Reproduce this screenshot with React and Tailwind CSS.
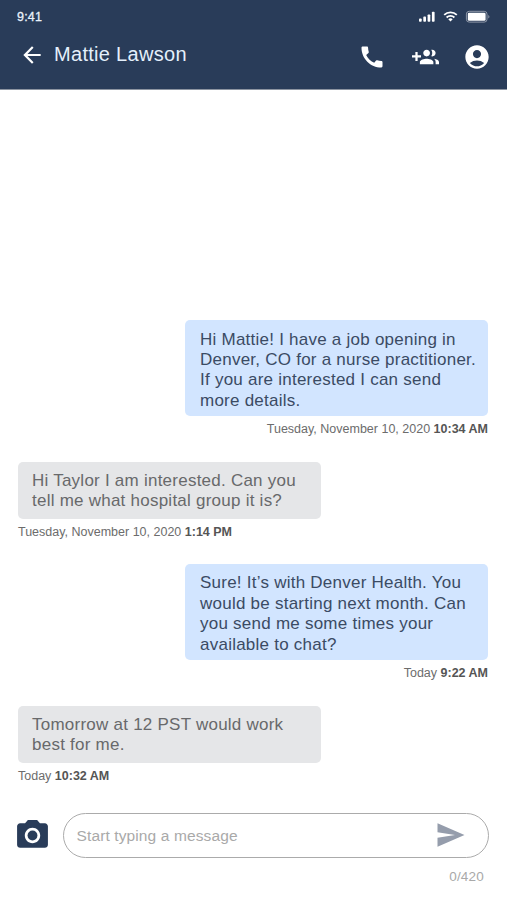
import React from 'react';
import { MdArrowBack, MdCall, MdAccountCircle, MdPhotoCamera } from 'react-icons/md';

const messages = [
  {
    mine: true,
    lines: ['Hi Mattie! I have a job opening in', 'Denver, CO for a nurse practitioner.', 'If you are interested I can send', 'more details.'],
    day: 'Tuesday, November 10, 2020',
    time: '10:34 AM',
  },
  {
    mine: false,
    lines: ['Hi Taylor I am interested. Can you', 'tell me what hospital group it is?'],
    day: 'Tuesday, November 10, 2020',
    time: '1:14 PM',
  },
  {
    mine: true,
    lines: ['Sure! It’s with Denver Health. You', 'would be starting next month. Can', 'you send me some times your', 'available to chat?'],
    day: 'Today',
    time: '9:22 AM',
  },
  {
    mine: false,
    lines: ['Tomorrow at 12 PST would work', 'best for me.'],
    day: 'Today',
    time: '10:32 AM',
  },
];

function StatusIcons() {
  return (
    <svg width="74" height="14" viewBox="0 0 74 14" fill="#fff" className="block mt-[0.5px]">
      <rect x="1" y="8.4" width="2.7" height="3.4" rx="0.8" />
      <rect x="5.3" y="6.6" width="2.7" height="5.2" rx="0.8" />
      <rect x="9.6" y="4.4" width="2.7" height="7.4" rx="0.8" />
      <rect x="13.9" y="1.8" width="2.7" height="10" rx="0.8" />
      <g fill="none" stroke="#fff" strokeWidth="1.8">
        <path d="M26.2 4.9a9 9 0 0 1 12.6 0" />
        <path d="M28.6 7.5a5.6 5.6 0 0 1 7.8 0" />
      </g>
      <path d="M32.5 11.6l-2.2-2.3a3.2 3.2 0 0 1 4.4 0z" />
      <rect x="48.4" y="1.3" width="20.6" height="10.8" rx="2.8" fill="none" stroke="#8f98a8" />
      <rect x="49.8" y="2.8" width="17.8" height="7.9" rx="1.3" />
      <path d="M70.3 5c1.5.5 1.5 3 0 3.5z" fill="#8f98a8" />
    </svg>
  );
}

function GroupAddIcon() {
  return (
    <svg width="27" height="27" viewBox="0 0 24 24" fill="currentColor">
      <path d="M8 10H5V7H3v3H0v2h3v3h2v-3h3v-2zm10 1c1.66 0 2.99-1.34 2.99-3S19.66 5 18 5c-.32 0-.63.05-.91.14.57.81.9 1.79.9 2.86s-.34 2.04-.9 2.86c.28.09.59.14.91.14zm-5 0c1.66 0 2.99-1.34 2.99-3S14.66 5 13 5c-1.66 0-3 1.34-3 3s1.34 3 3 3zm6.62 2.16c.83.73 1.38 1.66 1.38 2.84v2h3v-2c0-1.54-2.37-2.49-4.38-2.84zM13 13c-2 0-6 1-6 3v2h12v-2c0-2-4-3-6-3z" />
    </svg>
  );
}

function SendIcon() {
  return (
    <svg width="28" height="24" viewBox="0 0 28 24" fill="#959dac">
      <path d="M0.5 0.3L27.5 12L0.5 23.7V14.8L18 12L0.5 9.2z" />
    </svg>
  );
}

function Header() {
  return (
    <header className="h-[90px] bg-[#293c59] border-b border-[#8c94a1] text-white">
      <div className="flex justify-between pl-[17px] pr-[15px] pt-[9px] h-[30px]">
        <span className="text-[12.5px] leading-[16px] font-medium text-[#e9f2fb] tracking-[0.2px] [-webkit-text-stroke:0.3px]">9:41</span>
        <StatusIcons />
      </div>
      <div className="flex items-center h-[54px] pl-[19px] pr-[16px]">
        <button className="block mb-[5px]" aria-label="Back">
          <MdArrowBack size={26} />
        </button>
        <h1 className="ml-[9px] mb-[7px] text-[20px] leading-6 text-[#e4f0fc] tracking-[0.3px]">Mattie Lawson</h1>
        <div className="ml-auto flex items-center">
          <MdCall size={28} />
          <div className="ml-[26px]">
            <GroupAddIcon />
          </div>
          <MdAccountCircle size={28} className="ml-[24px]" />
        </div>
      </div>
    </header>
  );
}

function Message({ message }) {
  const { mine, lines, day, time } = message;
  return (
    <div className={mine ? 'flex flex-col items-end' : 'flex flex-col items-start'}>
      <div
        className={
          mine
            ? 'w-[303px] h-[96px] rounded-[5px] bg-[#d2e5ff] text-[#3b4b64] pl-[15px] pt-[9.2px]'
            : 'w-[303px] h-[57px] rounded-[5px] bg-[#e5e6e8] text-[#68696b] pl-[14px] pt-[9px]'
        }
      >
        {lines.map((line) => (
          <p key={line} className="text-[17px] leading-[20.4px] whitespace-nowrap tracking-[0.24px]">
            {line}
          </p>
        ))}
      </div>
      <p className="mt-[5px] text-[12.5px] leading-4 text-[#6c6c6c] whitespace-nowrap">
        {day} <b className="text-[#555]">{time}</b>
      </p>
    </div>
  );
}

function Composer() {
  return (
    <footer className="pl-[14px] pr-[18px]">
      <div className="flex items-center">
        <MdPhotoCamera size={37} color="#293c59" />
        <div className="ml-[12px] flex-1 flex items-center justify-between h-[45px] rounded-full border-[1.5px] border-[#ababab] pl-[12.5px] pr-[23px]">
          <span className="pt-[2px] text-[15.5px] tracking-[0.12px] text-[#a9a9a9]">Start typing a message</span>
          <SendIcon />
        </div>
      </div>
      <p className="mt-[10px] pr-[5px] text-right text-[13.5px] leading-[18px] tracking-[0.2px] text-[#a9a9a9]">0/420</p>
    </footer>
  );
}

function App() {
  return (
    <div className="w-[507px] h-[900px] flex flex-col bg-white overflow-hidden font-['Liberation_Sans',sans-serif]">
      <Header />
      <main className="flex flex-col gap-[24.4px] pt-[230.4px] pl-[18px] pr-[19px] h-[722.5px]">
        {messages.map((message) => (
          <Message key={message.time} message={message} />
        ))}
      </main>
      <Composer />
    </div>
  );
}

export default App;
